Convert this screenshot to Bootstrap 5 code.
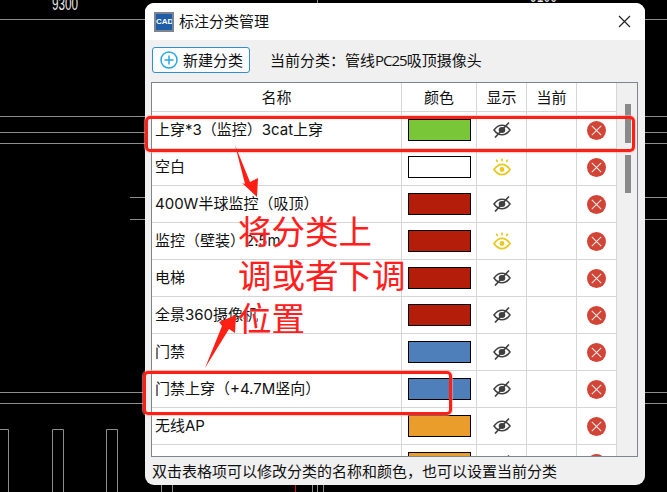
<!DOCTYPE html>
<html lang="zh-CN">
<head>
<meta charset="utf-8">
<title>标注分类管理</title>
<link rel="stylesheet" href="https://cdn.jsdelivr.net/npm/bootstrap@5.3.0/dist/css/bootstrap.min.css">
<style>
html,body{margin:0;height:100%;background:#000;overflow:hidden}
body{font-family:"Open Sans","Noto Sans CJK SC",sans-serif;font-size:15px;color:#111}
.stage{position:relative;width:667px;height:492px;overflow:hidden}
.cad{position:absolute;left:0;top:0}
.cad line,.cad path{stroke:#8d8d8d;stroke-width:1;fill:none}
.cad text{fill:#e8e8e8;font:18px "Liberation Sans",sans-serif}
.dlg{position:absolute;left:145px;top:3px;width:500px;height:482px;background:#f0f0f0;border-radius:9px;overflow:hidden}
.dlg-title{height:37px;background:#fff;padding:0 9px;font-size:15px}
.dlg-logo{width:20px;height:20px;background:#1f5da6;border:2px solid #7d8690;color:#fff;font:bold 8px "Liberation Sans",sans-serif;line-height:16px;text-align:center;margin-right:5px;margin-top:1px;overflow:hidden}
.dlg-close{margin-left:auto;margin-right:5px}
.dlg-tools{height:42px;padding:7px 7px 0}
.new-btn{width:98px;height:26px;padding:0 0 0 7px;background:#fafcfd;border:1px solid #2f8fd8;border-radius:3px;font-size:15px;color:#111;gap:5px;line-height:1}
.new-btn:hover{background:#fafcfd;border-color:#2f8fd8}
.cur-label{margin-left:20px;height:26px;line-height:26px}
.cur-code{letter-spacing:-1px}
.grid-frame{margin:0 7px 0 6px;height:375px;border:1px solid #7e858d;background:#f0f0f0}
.grid-clip{width:465px;height:373px;overflow:hidden;background:#fff}
.cat-grid{width:465px;table-layout:fixed;border-collapse:separate;border-spacing:0;margin:0;--bs-table-border-color:#d6d6d6}
.cat-grid th,.cat-grid td{padding:0;border:0;border-right:1px solid #d6d6d6;border-bottom:1px solid #d6d6d6;height:37px;vertical-align:middle;background:#fff;color:#111;font-weight:400;font-size:15px}
.cat-grid th{height:29px;text-align:center;line-height:20px}
.cat-grid td.nm{padding-left:3px;white-space:nowrap;overflow:visible;font-family:"Inter","Noto Sans CJK SC",sans-serif}
.cat-grid td.mid{text-align:center}
.cat-grid svg{display:block;margin:auto}
.sw{display:block;width:63px;height:22px;border:1px solid #000;margin:0 0 0 6px}
.sw-g{background:#7ac639}.sw-w{background:#fff}.sw-r{background:#b51d0b}.sw-b{background:#4f7fba}.sw-o{background:#eb9d2b}
.bar{width:20px;padding-top:21px;gap:12px;padding-left:8px}
.bar-thumb{width:6px;background:#8a8a8a}
.bar-a{height:39px}.bar-b{height:38px}
.dlg-status{padding:3px 0 0 7px;font-size:15px;line-height:22px;white-space:nowrap}
.mark-box{position:absolute;border:3px solid #ff2015;border-radius:5px;box-shadow:0 0 1px 1px rgba(255,170,170,.6)}
.mark-a{left:145px;top:116px;width:490px;height:36px}
.mark-b{left:143px;top:371px;width:309px;height:44px}
.mark-arrows{position:absolute;left:0;top:0}
.mark-note{position:absolute;left:238px;top:208px;color:#ff1f1f;font:400 33.500px/43.500px "Noto Sans CJK SC",sans-serif;white-space:nowrap;text-shadow:0 0 1px #ffd0d0}
</style>
</head>
<body>
<svg width="0" height="0" class="d-block position-absolute">
<defs>
<symbol id="eye-off" viewBox="0 0 18 16">
<path d="M1 8C3.500 4.500 6 3.200 9 3.200s5.500 1.300 8 4.800c-2.500 3.500-5 4.800-8 4.800S3.500 11.500 1 8Z" fill="none" stroke="#3f3f3f" stroke-width="1.500"/>
<ellipse cx="9" cy="8" rx="3.300" ry="2.900" fill="#3f3f3f"/>
<path d="M2 15.500 16 .5" stroke="#3f3f3f" stroke-width="1.600" fill="none"/>
</symbol>
<symbol id="eye-on" viewBox="0 0 18 18">
<path d="M1 11.500C3.500 7.800 6 6.300 9 6.300s5.500 1.500 8 5.200c-2.500 3.700-5 5.200-8 5.200s-5.500-1.500-8-5.200Z" fill="none" stroke="#e8c81e" stroke-width="1.700"/>
<circle cx="9" cy="11.500" r="2.400" fill="#e8c81e"/>
<path d="M9 .5v3M3.300 1.500l1.300 2.700M14.700 1.500l-1.300 2.700" stroke="#e8c81e" stroke-width="1.600" fill="none"/>
</symbol>
<symbol id="del" viewBox="0 0 19 19">
<circle cx="9.500" cy="9.500" r="9.500" fill="#d14436"/>
<path d="M4.800 4.800l9.400 9.400M14.200 4.800l-9.400 9.400" stroke="#fbe9e7" stroke-width="1.100" fill="none"/>
</symbol>
</defs>
</svg>
<div class="stage">
<svg class="cad" width="667" height="492" viewBox="0 0 667 492">
<text x="52" y="10" textLength="26" lengthAdjust="spacingAndGlyphs">9300</text>
<text x="530" y="2" textLength="27" lengthAdjust="spacingAndGlyphs">9100</text>
<line x1="317.500" y1="0" x2="317.500" y2="4"/>
<line x1="0" y1="19.500" x2="667" y2="19.500"/>
<line x1="0" y1="116.500" x2="667" y2="116.500"/>
<line x1="0" y1="132.500" x2="667" y2="132.500"/>
<line x1="0" y1="143.500" x2="667" y2="143.500"/>
<line x1="130" y1="197.500" x2="667" y2="197.500"/>
<line x1="130" y1="219.500" x2="667" y2="219.500"/>
<line x1="0" y1="392.500" x2="667" y2="392.500"/>
<line x1="0" y1="403.500" x2="667" y2="403.500"/>
<path d="M0 429.500H8.500V492M52.500 492V429.500H63.500V492M106.500 492V429.500H117.500V492"/>
<path d="M161.500 484V492M172.500 484V492M312.500 484V492M317.500 484V492M323.500 484V492"/>
<line x1="295.500" y1="484" x2="295.500" y2="492" style="stroke:#e01010"/>
</svg>

<section class="dlg d-flex flex-column">
<header class="dlg-title d-flex align-items-center">
<span class="dlg-logo flex-shrink-0">CAD</span>
<span>标注分类管理</span>
<svg class="dlg-close" width="13" height="13" viewBox="0 0 13 13"><path d="M1 1l11 11M12 1 1 12" stroke="#222" stroke-width="1.200" fill="none"/></svg>
</header>
<div class="dlg-tools d-flex align-items-start">
<button type="button" class="btn new-btn d-flex align-items-center">
<svg width="18" height="18" viewBox="0 0 18 18"><circle cx="9" cy="9" r="8" fill="#fff" stroke="#2aa7e0" stroke-width="1.500"/><path d="M9 4.500v9M4.500 9h9" stroke="#2aa7e0" stroke-width="1.500" fill="none"/></svg>
<span>新建分类</span>
</button>
<span class="cur-label">当前分类：管线<span class="cur-code">PC25</span>吸顶摄像头</span>
</div>
<div class="grid-frame d-flex">
<div class="grid-clip">
<table class="table cat-grid">
<colgroup><col style="width:250px"><col style="width:75px"><col style="width:50px"><col style="width:50px"><col style="width:40px"></colgroup>
<thead><tr><th>名称</th><th>颜色</th><th>显示</th><th>当前</th><th></th></tr></thead>
<tbody>
<tr><td class="nm">上穿*3（监控）3cat上穿</td><td><span class="sw sw-g"></span></td><td class="mid"><svg width="18" height="16"><use href="#eye-off"/></svg></td><td></td><td class="mid"><svg width="19" height="19"><use href="#del"/></svg></td></tr>
<tr><td class="nm">空白</td><td><span class="sw sw-w"></span></td><td class="mid"><svg width="18" height="18"><use href="#eye-on"/></svg></td><td></td><td class="mid"><svg width="19" height="19"><use href="#del"/></svg></td></tr>
<tr><td class="nm">400W半球监控（吸顶）</td><td><span class="sw sw-r"></span></td><td class="mid"><svg width="18" height="16"><use href="#eye-off"/></svg></td><td></td><td class="mid"><svg width="19" height="19"><use href="#del"/></svg></td></tr>
<tr><td class="nm">监控（壁装）2.5m</td><td><span class="sw sw-r"></span></td><td class="mid"><svg width="18" height="18"><use href="#eye-on"/></svg></td><td></td><td class="mid"><svg width="19" height="19"><use href="#del"/></svg></td></tr>
<tr><td class="nm">电梯</td><td><span class="sw sw-r"></span></td><td class="mid"><svg width="18" height="16"><use href="#eye-off"/></svg></td><td></td><td class="mid"><svg width="19" height="19"><use href="#del"/></svg></td></tr>
<tr><td class="nm">全景360摄像机</td><td><span class="sw sw-r"></span></td><td class="mid"><svg width="18" height="16"><use href="#eye-off"/></svg></td><td></td><td class="mid"><svg width="19" height="19"><use href="#del"/></svg></td></tr>
<tr><td class="nm">门禁</td><td><span class="sw sw-b"></span></td><td class="mid"><svg width="18" height="16"><use href="#eye-off"/></svg></td><td></td><td class="mid"><svg width="19" height="19"><use href="#del"/></svg></td></tr>
<tr><td class="nm">门禁上穿（+4.7M竖向）</td><td><span class="sw sw-b"></span></td><td class="mid"><svg width="18" height="16"><use href="#eye-off"/></svg></td><td></td><td class="mid"><svg width="19" height="19"><use href="#del"/></svg></td></tr>
<tr><td class="nm">无线AP</td><td><span class="sw sw-o"></span></td><td class="mid"><svg width="18" height="16"><use href="#eye-off"/></svg></td><td></td><td class="mid"><svg width="19" height="19"><use href="#del"/></svg></td></tr>
<tr><td class="nm"></td><td><span class="sw sw-o"></span></td><td class="mid"><svg width="18" height="16"><use href="#eye-off"/></svg></td><td></td><td class="mid"><svg width="19" height="19"><use href="#del"/></svg></td></tr>
</tbody>
</table>
</div>
<div class="bar d-flex flex-column">
<div class="bar-thumb bar-a"></div>
<div class="bar-thumb bar-b"></div>
</div>
</div>
<footer class="dlg-status">双击表格项可以修改分类的名称和颜色，也可以设置当前分类</footer>
</section>

<div class="mark-box mark-a"></div>
<div class="mark-box mark-b"></div>
<svg class="mark-arrows" width="667" height="492" viewBox="0 0 667 492">
<polygon points="235,145 250,182 258,178 257,197 242,183 245,184" fill="#ff2015"/>
<polygon points="205,368 222,326 219,322 236,315 235,333 229,329" fill="#ff2015"/>
</svg>
<div class="mark-note">将分类上<br>调或者下调<br>位置</div>
</div>
<script src="https://cdn.jsdelivr.net/npm/bootstrap@5.3.0/dist/js/bootstrap.bundle.min.js"></script>
</body>
</html>
